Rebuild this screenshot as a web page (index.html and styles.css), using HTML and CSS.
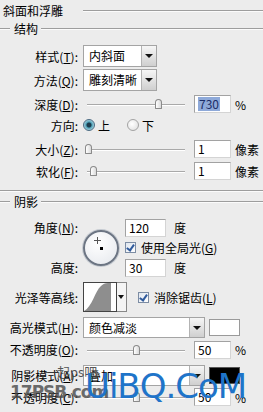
FILE: index.html
```html
<!DOCTYPE html>
<html lang="zh-CN">
<head>
  <meta charset="UTF-8" />
  <title>斜面和浮雕</title>
  <link rel="stylesheet" href="styles.css">
</head>
<body>
  <div class="panel">
    <div class="title-row">
      <span class="title">斜面和浮雕</span>
      <span class="rule"></span>
    </div>

    <div class="legend">
      <span class="rule stub"></span>
      <span class="legend-text">结构</span>
      <span class="rule"></span>
    </div>

    <div class="row h22 mt8">
      <span class="lbl">样式(<u>T</u>):</span>
      <div class="select w74"><span class="sel-val">内斜面</span><span class="sel-btn"></span></div>
    </div>
    <div class="row h22 mt2">
      <span class="lbl">方法(<u>Q</u>):</span>
      <div class="select w74"><span class="sel-val">雕刻清晰</span><span class="sel-btn"></span></div>
    </div>
    <div class="row h20 mt3">
      <span class="lbl">深度(<u>D</u>):</span>
      <div class="slider"><span class="thumb" style="left: 68px"></span></div>
      <div class="field"><span class="selected">730</span></div>
      <span class="unit">%</span>
    </div>
    <div class="row h18 mt2">
      <span class="lbl">方向:</span>
      <span class="radio on"></span><span class="opt">上</span>
      <span class="radio"></span><span class="opt">下</span>
    </div>
    <div class="row h20 mt5">
      <span class="lbl">大小(<u>Z</u>):</span>
      <div class="slider"><span class="thumb" style="left: -2px"></span></div>
      <div class="field">1</div>
      <span class="unit">像素</span>
    </div>
    <div class="row h20 mt2">
      <span class="lbl">软化(<u>F</u>):</span>
      <div class="slider"><span class="thumb" style="left: 3px"></span></div>
      <div class="field">1</div>
      <span class="unit">像素</span>
    </div>

    <div class="divider"></div>

    <div class="legend shadow-legend">
      <span class="rule stub"></span>
      <span class="legend-text">阴影</span>
      <span class="rule"></span>
    </div>

    <div class="angle-block">
      <span class="lbl a-lbl">角度(<u>N</u>):</span>
      <div class="dial">
        <span class="cross"></span>
        <span class="dot"></span>
      </div>
      <div class="angle-line">
        <div class="field wide">120</div><span class="unit">度</span>
      </div>
      <div class="check-line">
        <span class="check"></span><span class="check-text">使用全局光(<u>G</u>)</span>
      </div>
      <span class="lbl h-lbl">高度:</span>
      <div class="height-line">
        <div class="field wide">30</div><span class="unit">度</span>
      </div>
    </div>

    <div class="row contour-row">
      <span class="lbl">光泽等高线:</span>
      <div class="contour">
        <svg width="32" height="28" viewBox="0 0 32 28">
          <path d="M0 28 C8 24 11 8 17 3 C19 1 21 0 24 0 L27 0 L27 28 Z" fill="#8e8e8e"/>
        </svg>
      </div>
      <span class="contour-btn"></span>
      <span class="check aa"></span><span class="check-text">消除锯齿(<u>L</u>)</span>
    </div>

    <div class="row h21 mt5">
      <span class="lbl">高光模式(<u>H</u>):</span>
      <div class="select w122"><span class="sel-val">颜色减淡</span><span class="sel-btn"></span></div>
      <span class="swatch white"></span>
    </div>
    <div class="row h17 mt3">
      <span class="lbl">不透明度(<u>O</u>):</span>
      <div class="slider"><span class="thumb" style="left: 46px"></span></div>
      <div class="field">50</div>
      <span class="unit">%</span>
    </div>
    <div class="row h21 mt7">
      <span class="lbl">阴影模式(<u>A</u>):</span>
      <div class="select w122"><span class="sel-val">叠加</span><span class="sel-btn"></span></div>
      <span class="swatch black"></span>
    </div>
    <div class="row h18 mt2">
      <span class="lbl">不透明度(<u>C</u>):</span>
      <div class="slider"><span class="thumb" style="left: 46px"></span></div>
      <div class="field">50</div>
      <span class="unit">%</span>
    </div>

    <span class="wm-small">一起ps吧</span>
    <span class="wm-site">17PSB.com</span>
    <span class="wm-big">UiBQ.CoM</span>
  </div>
</body>
</html>
```

FILE: styles.css
```css
body {
  margin: 0;
  background: #ededed;
  font-family: "Noto Sans CJK SC", "DejaVu Sans", sans-serif;
  font-size: 12px;
  color: #000;
}

.panel {
  position: relative;
  width: 263px;
  height: 412px;
  overflow: hidden;
  background: #ececec;
}

u {
  text-decoration: underline;
  text-underline-offset: 1px;
}

/* headings and rules */

.title-row {
  display: flex;
  align-items: center;
  height: 18px;
  margin-top: 2px;
}

.title {
  margin-left: 3px;
  margin-right: 20px;
  line-height: 18px;
}

.rule {
  flex: 1;
  height: 1px;
  background: #9d9d9d;
  border-bottom: 1px solid #fbfbfb;
}

.rule.stub {
  flex: none;
  width: 10px;
}

.legend {
  display: flex;
  align-items: center;
  height: 16px;
  margin-top: 1px;
}

.legend-text {
  margin: 0 3px 0 4px;
  line-height: 16px;
}

.divider {
  margin-top: 9px;
  height: 1px;
  background: #9d9d9d;
  border-bottom: 1px solid #fbfbfb;
}

.shadow-legend {
  margin-top: 2px;
}

/* rows */

.row {
  display: flex;
  align-items: center;
}

.h17 { height: 17px; }
.h18 { height: 18px; }
.h20 { height: 20px; }
.h21 { height: 21px; }
.h22 { height: 22px; }
.mt2 { margin-top: 2px; }
.mt3 { margin-top: 3px; }
.mt5 { margin-top: 5px; }
.mt7 { margin-top: 7px; }
.mt8 { margin-top: 8px; }

.lbl {
  flex: none;
  width: 78px;
  text-align: right;
  white-space: nowrap;
  margin-right: 5px;
}

/* select */

.select {
  display: flex;
  height: 100%;
  box-sizing: border-box;
  background: #fff;
  border: 1px solid #a4a4a4;
}

.w74 { width: 74px; }
.w122 { width: 122px; }

.sel-val {
  flex: 1;
  padding-left: 5px;
  line-height: 19px;
  white-space: nowrap;
  overflow: hidden;
}

.sel-btn {
  position: relative;
  width: 14px;
  border-left: 1px solid #b3b3b3;
  background: linear-gradient(#f6f6f6, #cfcfcf);
}

.sel-btn::after {
  content: "";
  position: absolute;
  left: 3px;
  top: 8px;
  border-left: 4px solid transparent;
  border-right: 4px solid transparent;
  border-top: 4px solid #111;
}

/* slider */

.slider {
  position: relative;
  width: 98px;
  height: 100%;
  margin-left: 4px;
}

.slider::before {
  content: "";
  position: absolute;
  left: 0;
  right: 0;
  top: 50%;
  height: 1px;
  background: #a9a9a9;
  border-bottom: 1px solid #fff;
}

.thumb {
  position: absolute;
  top: 50%;
  width: 7px;
  height: 10px;
  margin-top: -5px;
  box-sizing: border-box;
  border: 1px solid #8a8a8a;
  border-radius: 4px 4px 1px 1px;
  background: linear-gradient(90deg, #fff, #dadada);
}

/* text fields */

.field {
  width: 37px;
  height: 18px;
  box-sizing: border-box;
  margin-left: 9px;
  padding-left: 3px;
  background: #fff;
  border: 1px solid #a2a2a2;
  border-right-color: #d4d4d4;
  border-bottom-color: #d4d4d4;
  line-height: 16px;
}

.field.wide {
  width: 41px;
  margin-left: 0;
}

.selected {
  display: inline-block;
  background: #8ea9d9;
  color: #1b2d66;
  line-height: 14px;
  padding: 0 1px;
}

.unit {
  margin-left: 4px;
}

/* radios and checks */

.radio {
  width: 12px;
  height: 12px;
  box-sizing: border-box;
  border-radius: 50%;
  border: 1px solid #a3a3a3;
  background: radial-gradient(circle at 40% 40%, #fff, #dcdcdc);
}

.radio.on {
  border-color: #4a6a82;
  background: radial-gradient(circle, #1d3c4c 0 2px, #4fa2b8 3px, #cde6ee 6px);
}

.opt {
  margin-left: 3px;
  margin-right: 17px;
}

.check {
  position: relative;
  flex: none;
  width: 11px;
  height: 11px;
  box-sizing: border-box;
  border: 1px solid #7c8ca3;
  background: linear-gradient(135deg, #dfe6ef, #fff);
}

.check::after {
  content: "";
  position: absolute;
  left: 2px;
  top: 0;
  width: 3px;
  height: 6px;
  border-right: 2px solid #2f5a9c;
  border-bottom: 2px solid #2f5a9c;
  transform: rotate(35deg);
}

.check-text {
  margin-left: 5px;
  white-space: nowrap;
}

/* angle block */

.angle-block {
  display: grid;
  grid-template-columns: 83px 42px auto;
  grid-template-rows: 19px 17px 19px;
  row-gap: 2px;
  margin-top: 8px;
  align-items: center;
}

.a-lbl { grid-column: 1; grid-row: 1; }
.h-lbl { grid-column: 1; grid-row: 3; }

.dial {
  position: relative;
  grid-column: 2;
  grid-row: 1 / 4;
  width: 36px;
  height: 36px;
  box-sizing: border-box;
  border: 2px solid #6c7583;
  border-radius: 50%;
  background: radial-gradient(circle at 40% 35%, #ffffff, #e4e7ec);
  box-shadow: 0 0 0 1px #c5cad1;
}

.cross {
  position: absolute;
  left: 9px;
  top: 5px;
  width: 7px;
  height: 7px;
  background:
    linear-gradient(#555, #555) center / 1px 100% no-repeat,
    linear-gradient(#555, #555) center / 100% 1px no-repeat;
}

.dot {
  position: absolute;
  left: 15px;
  top: 15px;
  width: 3px;
  height: 3px;
  background: #000;
}

.angle-line,
.height-line,
.check-line {
  display: flex;
  align-items: center;
  grid-column: 3;
}

.angle-line { grid-row: 1; }
.check-line { grid-row: 2; }
.height-line { grid-row: 3; }

.angle-line .unit,
.height-line .unit {
  margin-left: 8px;
}

/* contour */

.contour-row {
  height: 30px;
  margin-top: 5px;
}

.contour {
  width: 34px;
  height: 30px;
  box-sizing: border-box;
  border: 1px solid #444;
  background: #fff;
}

.contour svg {
  display: block;
}

.contour-btn {
  position: relative;
  width: 10px;
  height: 30px;
  box-sizing: border-box;
  border: 1px solid #888;
  border-left: none;
  background: #f4f4f4;
}

.contour-btn::after {
  content: "";
  position: absolute;
  left: 1px;
  top: 12px;
  border-left: 3px solid transparent;
  border-right: 3px solid transparent;
  border-top: 4px solid #111;
}

.check.aa {
  margin-left: 11px;
}

/* colour swatches */

.swatch {
  width: 31px;
  height: 17px;
  box-sizing: border-box;
  margin-left: 4px;
  border: 1px solid #9a9a9a;
}

.swatch.white { background: #fff; }
.swatch.black { background: #000; border-color: #555; }

/* watermarks over the dialog */

.wm-small {
  position: absolute;
  left: 44px;
  top: 362px;
  font-size: 13px;
  color: #3a3a3a;
  opacity: 0.85;
}

.wm-site {
  position: absolute;
  left: 10px;
  top: 382px;
  font-family: "DejaVu Sans", sans-serif;
  font-weight: bold;
  font-size: 17px;
  letter-spacing: -1px;
  color: #4a4a4a;
  opacity: 0.8;
}

.wm-big {
  position: absolute;
  left: 85px;
  top: 366px;
  font-family: "DejaVu Sans", sans-serif;
  font-size: 34px;
  letter-spacing: -1px;
  color: #1f74c9;
}
```
